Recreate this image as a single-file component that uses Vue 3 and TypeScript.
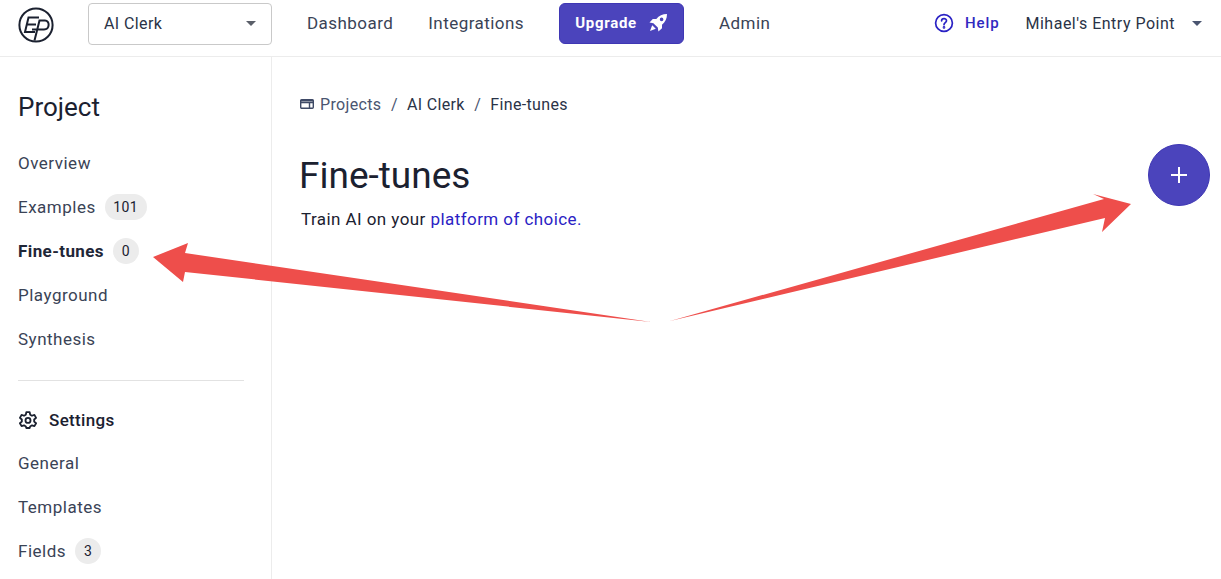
<script setup lang="ts">
interface NavItem {
  label: string
  count?: number
  active?: boolean
}

const projectItems: NavItem[] = [
  { label: 'Overview' },
  { label: 'Examples', count: 101 },
  { label: 'Fine-tunes', count: 0, active: true },
  { label: 'Playground' },
  { label: 'Synthesis' }
]

const settingsItems: NavItem[] = [
  { label: 'General' },
  { label: 'Templates' },
  { label: 'Fields', count: 3 }
]
</script>

<template>
  <div class="page">
    <header class="topbar">
      <svg class="logo" viewBox="0 0 36 36" fill="none" stroke="#1b2130" stroke-width="2">
        <circle cx="18" cy="18" r="16.6" />
        <path d="M21 10.5H10.5L7 25H17M9 17.5H18" />
        <path d="M16.5 33.5L21.5 13.5H27C32 13.5 32 22.5 26 22.5H14" />
      </svg>
      <div class="project-select">
        <span>AI Clerk</span>
        <span class="caret"></span>
      </div>
      <nav class="main-nav">
        <a>Dashboard</a>
        <a>Integrations</a>
        <button class="upgrade">
          Upgrade
          <svg viewBox="0 0 20 20" width="20" height="20" fill="#fff">
            <path d="M19 1C14.5 1 11 2.6 8.3 6H4.8L1.5 9.6L5.4 10.2L9.8 14.6L10.4 18.5L14 15.2V11.7C17.4 9 19 5.5 19 1ZM13.6 8.2A1.8 1.8 0 1 1 13.6 4.6A1.8 1.8 0 0 1 13.6 8.2Z" />
            <path d="M4.2 12.2L7.8 15.8L2 18Z" />
          </svg>
        </button>
        <a class="admin">Admin</a>
      </nav>
      <a class="help">
        <svg viewBox="0 0 20 20" width="20" height="20" fill="none" stroke="#2a22c4" stroke-width="1.7">
          <circle cx="10" cy="10" r="8.4" />
          <path d="M7.6 7.8C7.6 4.9 12.5 4.9 12.5 7.7C12.5 9.6 10 9.6 10 11.7" stroke-linecap="round" />
          <circle cx="10" cy="14.4" r="0.5" />
        </svg>
        Help
      </a>
      <div class="account">
        <span>Mihael's Entry Point</span>
        <span class="caret caret-account"></span>
      </div>
    </header>

    <div class="body">
      <aside class="sidebar">
        <h2>Project</h2>
        <ul>
          <li v-for="item in projectItems" :key="item.label" :class="{ active: item.active }">
            {{ item.label }}
            <span v-if="item.count !== undefined" class="count">{{ item.count }}</span>
          </li>
        </ul>
        <hr />
        <div class="settings-title">
          <svg viewBox="0 0 24 24" width="20" height="20" fill="none" stroke="#1b2130" stroke-width="2.2" stroke-linejoin="round">
            <path d="M10 2.6H14L14.6 5.6L16.8 6.9L19.7 5.9L21.7 9.4L19.4 11.4V13.9L21.7 15.9L19.7 19.4L16.8 18.4L14.6 19.7L14 21.6H10L9.4 19.7L7.2 18.4L4.3 19.4L2.3 15.9L4.6 13.9V11.4L2.3 9.4L4.3 5.9L7.2 6.9L9.4 5.6Z" />
            <circle cx="12" cy="12.5" r="3" />
          </svg>
          Settings
        </div>
        <ul>
          <li v-for="item in settingsItems" :key="item.label">
            {{ item.label }}
            <span v-if="item.count !== undefined" class="count">{{ item.count }}</span>
          </li>
        </ul>
      </aside>

      <main class="content">
        <div class="crumbs">
          <svg viewBox="0 0 14 12" width="14" height="12" fill="none" stroke="#3f4a66" stroke-width="1.4">
            <rect x="0.7" y="1.7" width="12.6" height="8.6" rx="1" />
            <path d="M0.7 4.6H13.3M9.5 4.6V10.3" />
            <path d="M0.7 2.6H13.3" stroke-width="2" />
          </svg>
          <a class="crumb-link">Projects</a>
          <span class="sep">/</span>
          <a>AI Clerk</a>
          <span class="sep">/</span>
          <a>Fine-tunes</a>
        </div>
        <div class="title-row">
          <div>
            <h1>Fine-tunes</h1>
            <p>Train AI on your <a>platform of choice.</a></p>
          </div>
          <button class="fab" aria-label="Add">
            <svg viewBox="0 0 16 16" width="16" height="16" stroke="#fff" stroke-width="2">
              <path d="M8 0V16M0 8H16" />
            </svg>
          </button>
        </div>
      </main>
    </div>

    <!-- annotation drawn over the screenshot -->
    <svg class="arrows" viewBox="0 0 1221 579" width="1221" height="579">
      <path d="M651 322L185 272L183 282L153 257L188 243L185 253Z" fill="#ee4e4b" />
      <path d="M670 321L1105 218L1102 232L1131 204L1093 194L1104 199Z" fill="#ee4e4b" />
    </svg>
  </div>
</template>

<style>
html,
body {
  margin: 0;
  background: #fff;
  overflow: hidden;
}
</style>

<style scoped>
.page {
  position: relative;
  height: 579px;
  overflow: hidden;
  font-family: Roboto, "Liberation Sans", sans-serif;
  font-size: 16px;
  color: #1b2130;
}

.topbar {
  display: flex;
  align-items: center;
  height: 57px;
  padding: 0 19px 0 18px;
  box-sizing: border-box;
  border-bottom: 1px solid #ececec;
}

.logo {
  width: 36px;
  height: 36px;
  flex-shrink: 0;
  margin-top: -6px;
}

.project-select {
  display: flex;
  align-items: center;
  justify-content: space-between;
  width: 184px;
  height: 42px;
  margin: -8px 0 0 34px;
  padding: 0 15px 2px;
  box-sizing: border-box;
  border: 1px solid #c9c9c9;
  border-radius: 4px;
  color: #2a3347;
  letter-spacing: 0.4px;
}

.caret {
  width: 0;
  height: 0;
  border-left: 5px solid transparent;
  border-right: 5px solid transparent;
  border-top: 5px solid #5a5f69;
}

.main-nav {
  display: flex;
  align-items: center;
  margin: -10px 0 0 35px;
  gap: 35px;
  color: #3a4356;
  font-size: 17px;
  letter-spacing: 0.45px;
  flex: 1;
}

.upgrade {
  display: flex;
  align-items: center;
  gap: 11px;
  height: 41px;
  width: 125px;
  justify-content: center;
  padding: 0;
  border: 1px solid #3f37b4;
  border-radius: 6px;
  background: #4b44bc;
  color: #fff;
  font-family: inherit;
  font-size: 15px;
  font-weight: 700;
  letter-spacing: 0.7px;
}

.help {
  display: flex;
  align-items: center;
  gap: 11px;
  margin-top: -10px;
  font-size: 15px;
  font-weight: 500;
  letter-spacing: 0.9px;
  color: #3029c0;
}

.account {
  display: flex;
  align-items: center;
  gap: 17px;
  margin: -10px 0 0 26px;
  color: #2a3347;
  letter-spacing: 0.5px;
}

.caret-account {
  border-top-color: #4a5570;
}

.body {
  display: flex;
  height: 522px;
}

.sidebar {
  width: 272px;
  flex-shrink: 0;
  padding: 36px 27px 0 18px;
  box-sizing: border-box;
  border-right: 1px solid #ececec;
}

.sidebar h2 {
  margin: 0 0 20px;
  font-size: 26px;
  line-height: 28px;
  font-weight: 400;
}

.sidebar ul {
  margin: 0;
  padding: 0;
  list-style: none;
}

.sidebar li {
  display: flex;
  align-items: center;
  gap: 9px;
  height: 44px;
  color: #3a4356;
  font-size: 17px;
  letter-spacing: 0.5px;
}

.sidebar li.active {
  font-weight: 700;
  color: #1f2738;
  letter-spacing: 0.4px;
}

.count {
  display: inline-flex;
  align-items: center;
  justify-content: center;
  min-width: 26px;
  height: 26px;
  padding: 0 8.5px;
  box-sizing: border-box;
  border-radius: 13px;
  background: #ececec;
  font-size: 14px;
  font-weight: 400;
  letter-spacing: 0.4px;
  color: #1b2130;
}

.sidebar hr {
  margin: 19px 0 0;
  border: 0;
  border-top: 1px solid #e2e2e2;
}

.settings-title {
  display: flex;
  align-items: center;
  gap: 11px;
  height: 22px;
  margin: 28px 0 10px;
  font-size: 17px;
  font-weight: 500;
  letter-spacing: 0.35px;
}

.content {
  flex: 1;
  padding: 36px 11px 0 28px;
}

.crumbs {
  display: flex;
  align-items: center;
  height: 22px;
  color: #2a3347;
  letter-spacing: 0.35px;
}

.crumbs svg {
  margin-right: 6px;
}

.crumb-link {
  color: #4a5570;
}

.sep {
  margin: 0 9px 0 9.5px;
  color: #4a5570;
}

.title-row {
  display: flex;
  justify-content: space-between;
  align-items: flex-start;
  margin-top: 29px;
}

h1 {
  margin: 11px 0 0 -1px;
  font-size: 37px;
  line-height: 42px;
  font-weight: 400;
}

p {
  margin: 11px 0 0 1px;
  font-size: 17px;
  letter-spacing: 0.43px;
  line-height: 22px;
}

p a {
  color: #2a22c4;
}

.fab {
  display: flex;
  align-items: center;
  justify-content: center;
  width: 62px;
  height: 62px;
  padding: 0;
  border: 1px solid #3f37b4;
  border-radius: 50%;
  background: #4b44bc;
}

.arrows {
  position: absolute;
  top: 0;
  left: 0;
  pointer-events: none;
}
</style>
